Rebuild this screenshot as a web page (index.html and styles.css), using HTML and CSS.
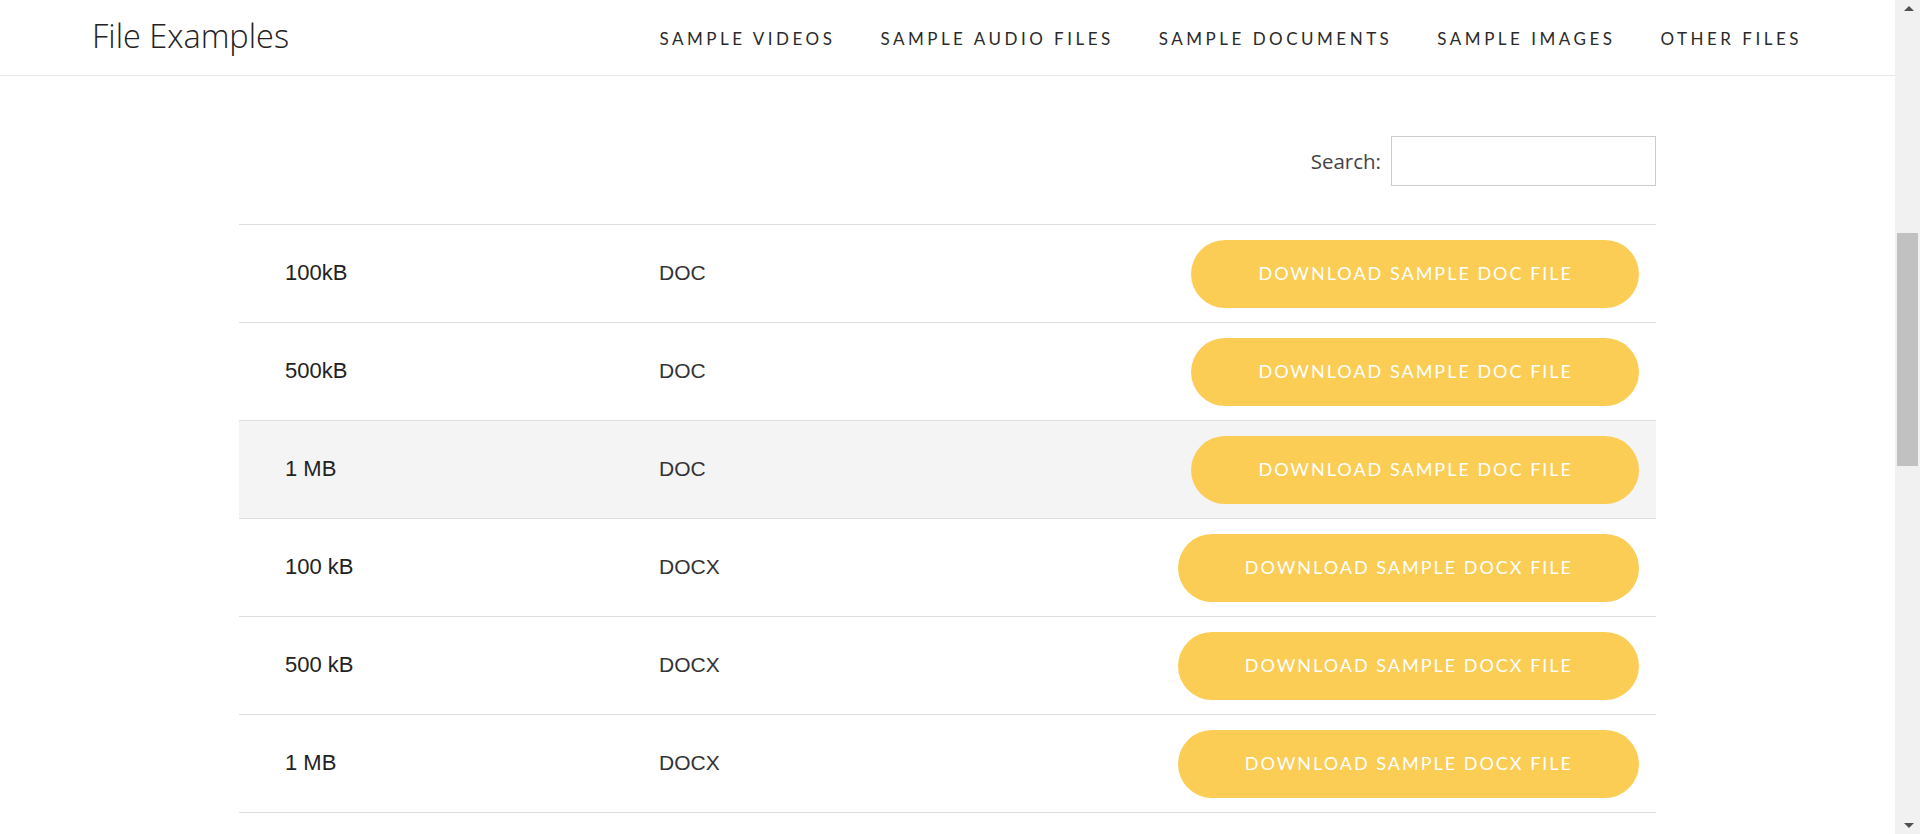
FILE: index.html
```html
<!DOCTYPE html>
<html lang="en">
<head>
<meta charset="utf-8">
<title>File Examples</title>
<link rel="stylesheet" href="styles.css">
</head>
<body>
<div class="viewport">
  <div class="page">
    <header class="site-header">
      <div class="logo">File Examples</div>
      <nav class="main-nav">
        <a class="nav-item">SAMPLE VIDEOS</a>
        <a class="nav-item">SAMPLE AUDIO FILES</a>
        <a class="nav-item">SAMPLE DOCUMENTS</a>
        <a class="nav-item">SAMPLE IMAGES</a>
        <a class="nav-item">OTHER FILES</a>
      </nav>
    </header>
    <main class="content">
      <div class="table-wrap">
        <div class="search-row">
          <label class="search-label">Search:</label>
          <input class="search-input" type="search">
        </div>
        <div class="file-table">
          <div class="row"><span class="cell-size">100kB</span><span class="cell-type">DOC</span><a class="btn">DOWNLOAD SAMPLE DOC FILE</a></div>
          <div class="row"><span class="cell-size">500kB</span><span class="cell-type">DOC</span><a class="btn">DOWNLOAD SAMPLE DOC FILE</a></div>
          <div class="row row-hover"><span class="cell-size">1 MB</span><span class="cell-type">DOC</span><a class="btn">DOWNLOAD SAMPLE DOC FILE</a></div>
          <div class="row"><span class="cell-size">100 kB</span><span class="cell-type">DOCX</span><a class="btn">DOWNLOAD SAMPLE DOCX FILE</a></div>
          <div class="row"><span class="cell-size">500 kB</span><span class="cell-type">DOCX</span><a class="btn">DOWNLOAD SAMPLE DOCX FILE</a></div>
          <div class="row"><span class="cell-size">1 MB</span><span class="cell-type">DOCX</span><a class="btn">DOWNLOAD SAMPLE DOCX FILE</a></div>
        </div>
      </div>
    </main>
  </div>
  <div class="scrollbar">
    <div class="sb-arrow sb-up"></div>
    <div class="sb-track">
      <div class="sb-thumb"></div>
    </div>
    <div class="sb-arrow sb-down"></div>
  </div>
</div>
</body>
</html>
```

FILE: styles.css
```css
* { box-sizing: border-box; }
html, body { margin: 0; padding: 0; }
body {
  width: 1920px;
  height: 834px;
  overflow: hidden;
  background: #fff;
  font-family: "Liberation Sans", Arial, sans-serif;
  color: #333;
}
.viewport {
  display: flex;
  width: 1920px;
  height: 834px;
}
.page {
  width: 1895px;
  height: 834px;
  overflow: hidden;
  display: flex;
  flex-direction: column;
}
.site-header {
  height: 76px;
  flex: 0 0 76px;
  border-bottom: 1px solid #e8e8e8;
  display: flex;
  align-items: center;
  justify-content: space-between;
  padding: 0 93px 0 92px;
}
.logo {
  font-family: "Open Sans", sans-serif;
  font-weight: 300;
  font-size: 32.5px;
  color: #222;
  line-height: 1;
  margin-top: -2px;
}
.main-nav {
  display: flex;
  gap: 45px;
  margin-top: 1px;
}
.nav-item {
  font-family: Lato, sans-serif;
  font-size: 17px;
  letter-spacing: 3.5px;
  color: #2a2a2a;
  text-decoration: none;
}
.content {
  flex: 1;
  display: flex;
  justify-content: center;
  padding-top: 60px;
}
.table-wrap {
  width: 1417px;
}
.search-row {
  display: flex;
  justify-content: flex-end;
  align-items: center;
  gap: 10px;
  margin-bottom: 38px;
}
.search-label {
  font-family: "Open Sans", sans-serif;
  font-size: 20.5px;
  color: #444;
}
.search-input {
  width: 265px;
  height: 50px;
  border: 1px solid #cccccc;
  background: #fff;
  margin: 0;
  padding: 0 8px;
  outline: none;
}
.file-table {
  border-top: 1px solid #dddddd;
}
.row {
  display: grid;
  grid-template-columns: 374px 1fr auto;
  align-items: center;
  height: 98px;
  border-bottom: 1px solid #dddddd;
  padding: 0 17px 0 46px;
}
.row-hover { background: #f4f4f4; }
.cell-size {
  font-size: 22px;
  color: #222;
  margin-bottom: 2px;
}
.cell-type {
  font-size: 21px;
  color: #333;
  margin-bottom: 2px;
}
.btn {
  display: flex;
  align-items: center;
  height: 68px;
  padding: 0 66px 2px 67px;
  border-radius: 34px;
  background: #fccd55;
  color: #fff;
  font-family: Lato, sans-serif;
  font-size: 18px;
  letter-spacing: 2px;
  text-decoration: none;
}
.scrollbar {
  width: 25px;
  height: 834px;
  background: #f1f1f1;
  display: flex;
  flex-direction: column;
}
.sb-arrow {
  height: 17px;
  flex: 0 0 17px;
  display: flex;
  justify-content: center;
  align-items: center;
}
.sb-up::before {
  content: "";
  border-left: 5px solid transparent;
  border-right: 5px solid transparent;
  border-bottom: 5px solid #505050;
  margin-left: 2px;
}
.sb-down::before {
  content: "";
  border-left: 5px solid transparent;
  border-right: 5px solid transparent;
  border-top: 5px solid #505050;
  margin-left: 2px;
}
.sb-track {
  flex: 1;
  padding-top: 216px;
}
.sb-thumb {
  width: 21px;
  height: 233px;
  margin-left: 2px;
  background: #c1c1c1;
}
```
